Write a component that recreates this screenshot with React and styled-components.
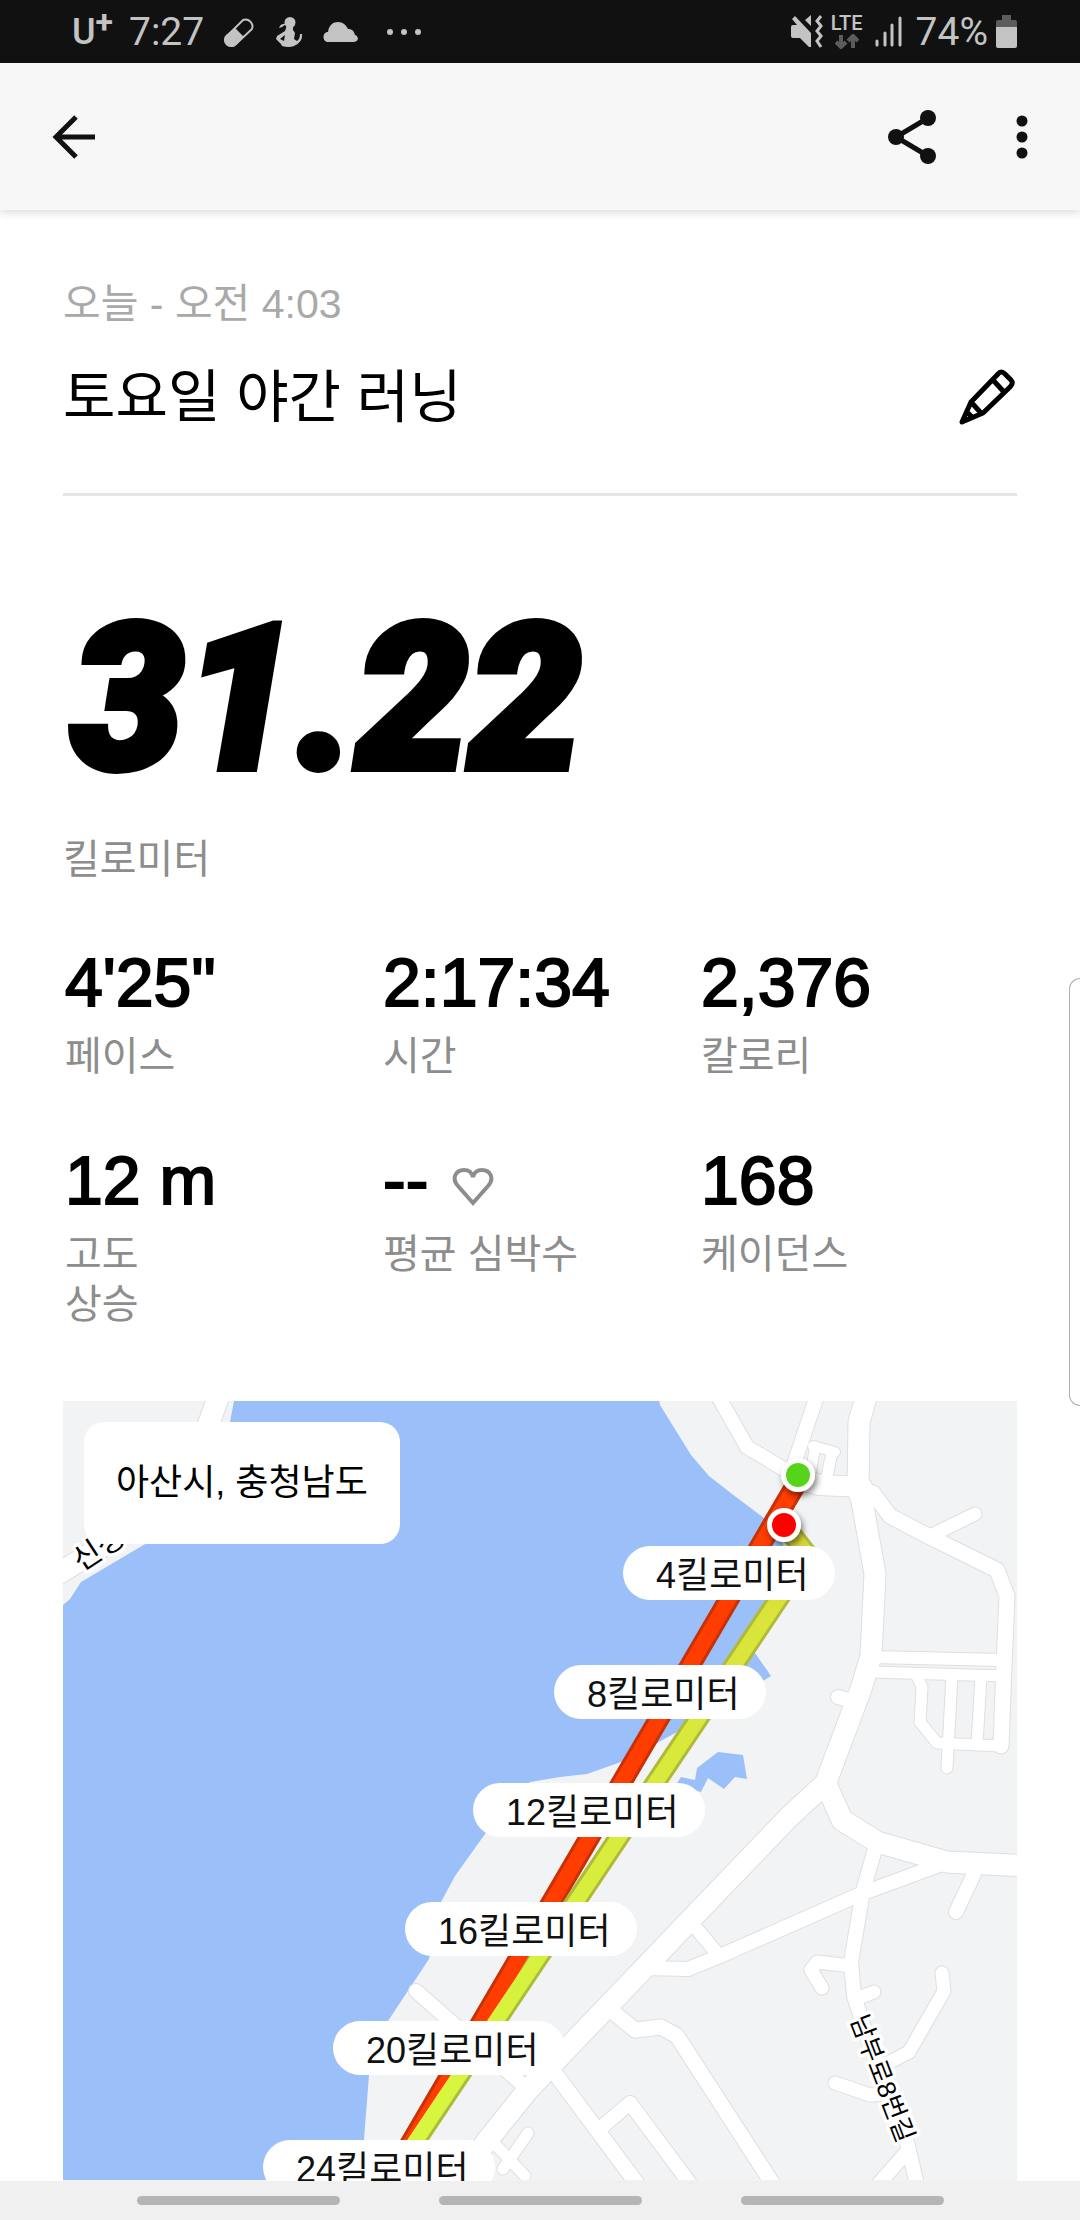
import React from "react";
import styled, { createGlobalStyle } from "styled-components";

const sans = `"Liberation Sans", "Noto Sans CJK KR", sans-serif`;
const system = `Roboto, "Noto Sans CJK KR", sans-serif`;

const GlobalStyle = createGlobalStyle`
  *, *::before, *::after { box-sizing: border-box; }
  body { margin: 0; background: #ffffff; font-family: ${sans}; color: #000000; }
  h1, h2, p, dl, dt, dd, ul { margin: 0; padding: 0; }
  button { margin: 0; padding: 0; border: 0; background: none; cursor: pointer; }
  svg { display: block; flex: none; }
`;

const Screen = styled.div`
  position: relative;
  display: flex;
  flex-direction: column;
  min-height: 100vh;
`;

const StatusBar = styled.header`
  display: flex;
  align-items: center;
  justify-content: space-between;
  height: 63px;
  padding: 0 63px 0 72px;
  background: #111111;
  color: #c3c3c3;
  font: 400 39px/62px ${system};
`;

const StatusGroup = styled.div`
  display: flex;
  align-items: center;
  gap: ${(p) => p.$gap}px;
`;

const Carrier = styled.span`
  display: flex;
  font-weight: 500;
  font-size: 36px;
  line-height: 68px;
  sup {
    font-weight: 700;
    font-size: 32px;
    line-height: 48px;
  }
`;

const Network = styled.span`
  display: flex;
  flex-direction: column;
  align-items: center;
  gap: 2px;
  margin-right: 4px;
  font-weight: 500;
  font-size: 20px;
  line-height: 17px;
`;

const AppBar = styled.nav`
  display: flex;
  align-items: center;
  gap: 38px;
  height: 147px;
  padding: 0 22px 0 38px;
  background: #f7f7f7;
  box-shadow: 0 2px 9px rgba(0, 0, 0, 0.16);
`;

const BarButton = styled.button`
  display: grid;
  place-items: center;
  width: 72px;
  height: 72px;
`;

const Spacer = styled.div`
  flex: 1;
`;

const Main = styled.main`
  flex: 1;
  display: flex;
  flex-direction: column;
  padding: 68px 63px 0;
`;

const RunHeader = styled.section`
  padding-bottom: 62px;
  border-bottom: 3px solid #e5e5e5;
`;

const RunDate = styled.p`
  color: #a9a9a9;
  font-size: 41px;
  line-height: 52px;
`;

const TitleRow = styled.div`
  display: flex;
  align-items: center;
  justify-content: space-between;
  margin-top: 34px;
`;

const RunTitle = styled.h1`
  font-weight: 400;
  font-size: 57px;
  line-height: 67px;
`;

const Distance = styled.p`
  margin-top: 94px;
  padding-left: 8px;
  font: italic 900 201px/220px Roboto, ${sans};
  -webkit-text-stroke: 8px #000000;
`;

const Label = styled.dt`
  color: #8d8d8d;
  font-size: 40px;
  line-height: 50px;
`;

const Unit = styled.p`
  margin-top: 24px;
  color: #8d8d8d;
  font-size: 40px;
  line-height: 50px;
`;

const Stats = styled.dl`
  display: grid;
  grid-template-columns: repeat(3, 1fr);
  row-gap: 54px;
  margin-top: 53px;
`;

const Stat = styled.div`
  display: flex;
  flex-direction: column-reverse;
  justify-content: flex-end;
  padding-left: 2px;
`;

const Value = styled.dd`
  display: flex;
  align-items: center;
  gap: 24px;
  margin-bottom: 4px;
  font-size: 68px;
  line-height: 90px;
  -webkit-text-stroke: 2px #000000;
  svg {
    margin-top: 14px;
  }
`;

const MapView = styled.section`
  position: relative;
  flex: 1;
  min-height: 779px;
  margin-top: 72px;
  overflow: hidden;
  background: #f1f3f5;
  > svg {
    position: absolute;
    top: 0;
    left: 0;
  }
`;

const Place = styled.h2`
  position: absolute;
  top: 21px;
  left: 21px;
  padding: 0 32px;
  border-radius: 20px;
  background: #ffffff;
  font-weight: 400;
  font-size: 36px;
  line-height: 122px;
`;

const Milestone = styled.span`
  position: absolute;
  left: ${(p) => p.$x}px;
  top: ${(p) => p.$y}px;
  padding: 5px 26px 0 33px;
  border-radius: 27px;
  background: #ffffff;
  color: #111111;
  font-size: 36px;
  line-height: 49px;
  white-space: nowrap;
`;

const NavBar = styled.footer`
  position: sticky;
  bottom: 0;
  display: flex;
  justify-content: center;
  gap: 99px;
  height: 39px;
  padding-top: 15px;
  background: #f0f0f0;
`;

const NavPill = styled.button`
  width: 203px;
  height: 9px;
  && {
    border-radius: 5px;
    background: #b5b5b5;
  }
`;

const EdgeHandle = styled.div`
  position: absolute;
  top: 978px;
  right: 0;
  width: 11px;
  height: 428px;
  border: 1px solid #b0b0b0;
  border-right: 0;
  border-radius: 16px 0 0 16px;
`;

const StreetName = styled.text`
  font-family: ${sans};
  font-size: ${(p) => p.$size}px;
  fill: #000000;
  stroke: #ffffff;
  stroke-width: 7px;
  stroke-linejoin: round;
  paint-order: stroke;
`;

const stats = [
  { label: ["페이스"], value: "4'25\"" },
  { label: ["시간"], value: "2:17:34" },
  { label: ["칼로리"], value: "2,376" },
  { label: ["고도", "상승"], value: "12 m" },
  { label: ["평균 심박수"], value: "--", heart: true },
  { label: ["케이던스"], value: "168" },
];

const milestones = [
  { km: 4, x: 560, y: 145 },
  { km: 8, x: 491, y: 264 },
  { km: 12, x: 410, y: 382 },
  { km: 16, x: 342, y: 501 },
  { km: 20, x: 270, y: 620 },
  { km: 24, x: 200, y: 739 },
];

// Road centre lines with their widths.
const roads = [
  [21, "M222 1388L209 1424L188 1480L140 1524L50 1580"],
  [14, "M714 1390L747 1448L787 1472L800 1478"],
  [14, "M820 1388L795 1462"],
  [21, "M869 1388L859 1423L858 1490L862 1502L875 1575L871 1657L861 1690L826 1783L827 1790"],
  [21, "M827 1783L790 1817L693 1918L653 1960L560 2057L527 2092L487 2142L455 2187"],
  [21, "M826 1785L842 1821L877 1843L947 1863L1030 1867"],
  [20, "M805 1482L820 1486L862 1488"],
  [10, "M813 1447L835 1453"],
  [10, "M815 1448L810 1478"],
  [11, "M832 1453L826 1482"],
  [15, "M862 1490L873 1494L890 1517L930 1538L997 1571L1007 1597L1004 1667L1001 1747"],
  [13, "M930 1537L975 1515"],
  [12, "M870 1658L1004 1661"],
  [11, "M870 1673L1003 1677"],
  [11, "M916 1675L922 1688L920 1723L937 1744L1001 1747"],
  [11, "M952 1677L947 1769"],
  [11, "M981 1677L977 1746"],
  [14, "M838 1698L852 1702"],
  [14, "M875 1850L863 1892L851 1963L854 1997L864 2028L908 2147L918 2190"],
  [14, "M945 1864L863 1894L720 1957L688 1970L643 1969"],
  [13, "M695 1928L716 1953"],
  [14, "M974 1875L956 1913"],
  [13, "M852 1967L817 1963L811 1971L822 1989"],
  [13, "M856 2000L874 1993"],
  [13, "M942 1974L944 1992L909 2053L884 2066"],
  [13, "M835 2084L870 2096L890 2095"],
  [15, "M612 2012L635 2031L661 2028L677 2037L776 2190"],
  [15, "M548 2065L641 2190"],
  [14, "M603 2127L630 2104L694 2190"],
  [14, "M905 2155L876 2188"],
  [14, "M416 1992L524 2087"],
  [11, "M528 2134L503 2170"],
  [11, "M492 2142L525 2177"],
];

const redRoute = "M801 1477L372 2210";
const limeRoute = "M786 1528L808 1556L372 2207";

function RouteMap() {
  return (
    <svg width="954" height="779" viewBox="63 1402 954 779" aria-hidden="true">
      <defs>
        <linearGradient id="lime" gradientUnits="userSpaceOnUse" x1="0" y1="1530" x2="0" y2="2100">
          <stop offset="0" stopColor="#d6d338" />
          <stop offset="0.15" stopColor="#dae43a" />
          <stop offset="1" stopColor="#d6f63f" />
        </linearGradient>
        <filter id="drop" x="-50%" y="-50%" width="200%" height="200%">
          <feDropShadow dx="2" dy="4" stdDeviation="3" floodOpacity="0.5" />
        </filter>
      </defs>
      <g fill="#9bbff9">
        <path d="M234 1402L230 1423L222 1500L147 1544L81 1583L70 1600L63 1606V2181H362L364 2140L369 2076L388 2022L429 1960L441 1903L455 1877L485 1835L530 1783L560 1778L587 1775L621 1763L657 1744L677 1733L715 1710L763 1682L771 1677L755 1654L748 1640L785 1570L783 1545L764 1519L732 1495L709 1477L691 1456L660 1406L659 1402Z" />
        <path d="M697 1769L718 1753L743 1756L747 1780L735 1778L724 1790L708 1779L701 1793L676 1786L681 1778L695 1781Z" />
      </g>
      <g fill="none" stroke="#dddfe1" strokeLinecap="round" strokeLinejoin="round">
        {roads.map(([w, d]) => (
          <path key={d} d={d} strokeWidth={w + 2} />
        ))}
      </g>
      <g fill="none" stroke="#ffffff" strokeLinecap="round" strokeLinejoin="round">
        {roads.map(([w, d]) => (
          <path key={d} d={d} strokeWidth={w} />
        ))}
      </g>
      <StreetName $size={30} transform="translate(81 1573) rotate(-33)">신성로</StreetName>
      <StreetName $size={26} transform="translate(850 2020) rotate(69)">남부로8번길</StreetName>
      <g fill="none" strokeLinejoin="round">
        <path d={redRoute} stroke="#c83106" strokeWidth="21" />
        <path d={limeRoute} stroke="#afba38" strokeWidth="21" />
        <path d={redRoute} stroke="#ff3d00" strokeWidth="15" />
        <path d={limeRoute} stroke="url(#lime)" strokeWidth="15" />
      </g>
      <g filter="url(#drop)">
        <circle cx="798" cy="1476" r="17" fill="#ffffff" />
        <circle cx="784" cy="1526" r="17" fill="#ffffff" />
      </g>
      <circle cx="798" cy="1476" r="12" fill="#55d41a" />
      <circle cx="784" cy="1526" r="12" fill="#ff0000" />
    </svg>
  );
}

const PillIcon = () => (
  <svg width="31" height="32" viewBox="0 0 31 32" fill="none">
    <path d="M3 20L19 4a7 7 0 0 1 9 9L12 28a6 6 0 0 1-9-8Z" stroke="#c3c3c3" strokeWidth="2" />
    <path d="M11 12L20 21L12 29a7 7 0 0 1-10-10Z" fill="#c3c3c3" />
  </svg>
);

const PersonIcon = () => (
  <svg width="28" height="32" viewBox="0 0 28 32" fill="#c3c3c3">
    <circle cx="15" cy="6.500" r="5.500" />
    <path d="M4 12Q6 7 11 8Q8 11 4 12ZM12 9H18V14L20 17L19 23L22 25Q25 23 25 18H27Q28 26 19 30Q14 32 7 30L6 28L1 23L2 20L10 15Z" />
    <path d="M5 23L10 19L9 25Z" fill="#111111" />
  </svg>
);

const CloudIcon = () => (
  <svg width="35" height="20" viewBox="0 0 35 20" fill="#c3c3c3">
    <path d="M5 20C-1 20 -1 10 5 10C6 3 10 0 15 0C20 0 23 3 25 7C29 7 31 9 32 13C36 14 36 20 31 20Z" />
  </svg>
);

const DotsIcon = () => (
  <svg width="36" height="8" viewBox="0 0 36 8" fill="#c3c3c3">
    <circle cx="4" cy="4" r="3" />
    <circle cx="18" cy="4" r="3" />
    <circle cx="32" cy="4" r="3" />
  </svg>
);

const MuteIcon = () => (
  <svg width="32" height="33" viewBox="0 0 32 33">
    <path d="M0 12Q0 10 2 10H6L1 4L4 1L20 18V32L18 32L9 23H2Q0 23 0 21ZM14 5L20 0V11Z" fill="#c3c3c3" />
    <path d="M30 1L26 6L30 11L26 16L30 21L26 26L30 32" fill="none" stroke="#c3c3c3" strokeWidth="3" />
  </svg>
);

const DataIcon = () => (
  <svg width="24" height="15" viewBox="0 0 24 15" fill="none" stroke="#5c5c5c" strokeWidth="4">
    <path d="M6 1V12M1 8L6 13L11 8M18 14V3M13 7L18 2L23 7" />
  </svg>
);

const SignalIcon = () => (
  <svg width="27" height="31" viewBox="0 0 27 31" stroke="#c3c3c3" strokeWidth="3" strokeLinecap="round">
    <path d="M2 25V29M10 17V29M17 9V29M25 2V29" />
  </svg>
);

const BatteryIcon = () => (
  <svg width="21" height="33" viewBox="0 0 21 33">
    <path d="M6 0H15V5H19Q21 5 21 7V14H0V7Q0 5 2 5H6Z" fill="#5c5c5c" />
    <path d="M0 12H21V31Q21 33 19 33H2Q0 33 0 31Z" fill="#c3c3c3" />
  </svg>
);

const BackIcon = () => (
  <svg width="44" height="44" viewBox="0 0 44 44" fill="none" stroke="#111111" strokeWidth="5">
    <path d="M43 22H5M24 2L4 22L24 42" />
  </svg>
);

const ShareIcon = () => (
  <svg width="48" height="54" viewBox="0 0 48 54">
    <path d="M40 8L8 27L40 46" fill="none" stroke="#111111" strokeWidth="5" />
    <circle cx="40" cy="8" r="8" fill="#111111" />
    <circle cx="8" cy="27" r="8" fill="#111111" />
    <circle cx="40" cy="46" r="8" fill="#111111" />
  </svg>
);

const MoreIcon = () => (
  <svg width="12" height="44" viewBox="0 0 12 44" fill="#111111">
    <circle cx="6" cy="6" r="5.500" />
    <circle cx="6" cy="22" r="5.500" />
    <circle cx="6" cy="38" r="5.500" />
  </svg>
);

const PencilIcon = () => (
  <svg width="58" height="58" viewBox="0 0 58 58" fill="none" stroke="#000000" strokeWidth="5" strokeLinejoin="round">
    <path d="M3 53L12 33L39 5Q42 1 46 5L52 11Q55 14 51 18L24 44ZM12 33L22 44M34 11L45 23M8 43L13 48" />
  </svg>
);

const HeartIcon = () => (
  <svg width="42" height="40" viewBox="0 0 42 40" fill="none" stroke="#8d8d8d" strokeWidth="4">
    <path d="M21 36L6 19C-1 11 4 3 12 3C17 3 20 6 21 10C22 6 25 3 30 3C38 3 43 11 36 19Z" />
  </svg>
);

export default function App() {
  return (
    <>
      <GlobalStyle />
      <Screen>
        <StatusBar>
          <StatusGroup $gap={28}>
            <StatusGroup $gap={20}>
              <StatusGroup $gap={16}>
                <Carrier>U<sup>+</sup></Carrier>
                <span>7:27</span>
              </StatusGroup>
              <PillIcon />
              <PersonIcon />
              <CloudIcon />
            </StatusGroup>
            <DotsIcon />
          </StatusGroup>
          <StatusGroup $gap={14}>
            <StatusGroup $gap={8}>
              <MuteIcon />
              <Network>
                LTE
                <DataIcon />
              </Network>
              <SignalIcon />
            </StatusGroup>
            <StatusGroup $gap={8}>
              <span>74%</span>
              <BatteryIcon />
            </StatusGroup>
          </StatusGroup>
        </StatusBar>
        <AppBar>
          <BarButton aria-label="뒤로"><BackIcon /></BarButton>
          <Spacer />
          <BarButton aria-label="공유"><ShareIcon /></BarButton>
          <BarButton aria-label="더보기"><MoreIcon /></BarButton>
        </AppBar>
        <Main>
          <RunHeader>
            <RunDate>오늘 - 오전 4:03</RunDate>
            <TitleRow>
              <RunTitle>토요일 야간 러닝</RunTitle>
              <button aria-label="제목 수정"><PencilIcon /></button>
            </TitleRow>
          </RunHeader>
          <Distance>31.22</Distance>
          <Unit>킬로미터</Unit>
          <Stats>
            {stats.map((s) => (
              <Stat key={s.value}>
                <Label>
                  {s.label.map((line) => (
                    <div key={line}>{line}</div>
                  ))}
                </Label>
                <Value>
                  {s.value}
                  {s.heart && <HeartIcon />}
                </Value>
              </Stat>
            ))}
          </Stats>
          <MapView aria-label="러닝 경로">
            <RouteMap />
            <Place>아산시, 충청남도</Place>
            {milestones.map((m) => (
              <Milestone key={m.km} $x={m.x} $y={m.y}>{m.km}킬로미터</Milestone>
            ))}
          </MapView>
        </Main>
        <NavBar>
          <NavPill aria-label="최근 앱" />
          <NavPill aria-label="홈" />
          <NavPill aria-label="이전" />
        </NavBar>
        <EdgeHandle />
      </Screen>
    </>
  );
}
